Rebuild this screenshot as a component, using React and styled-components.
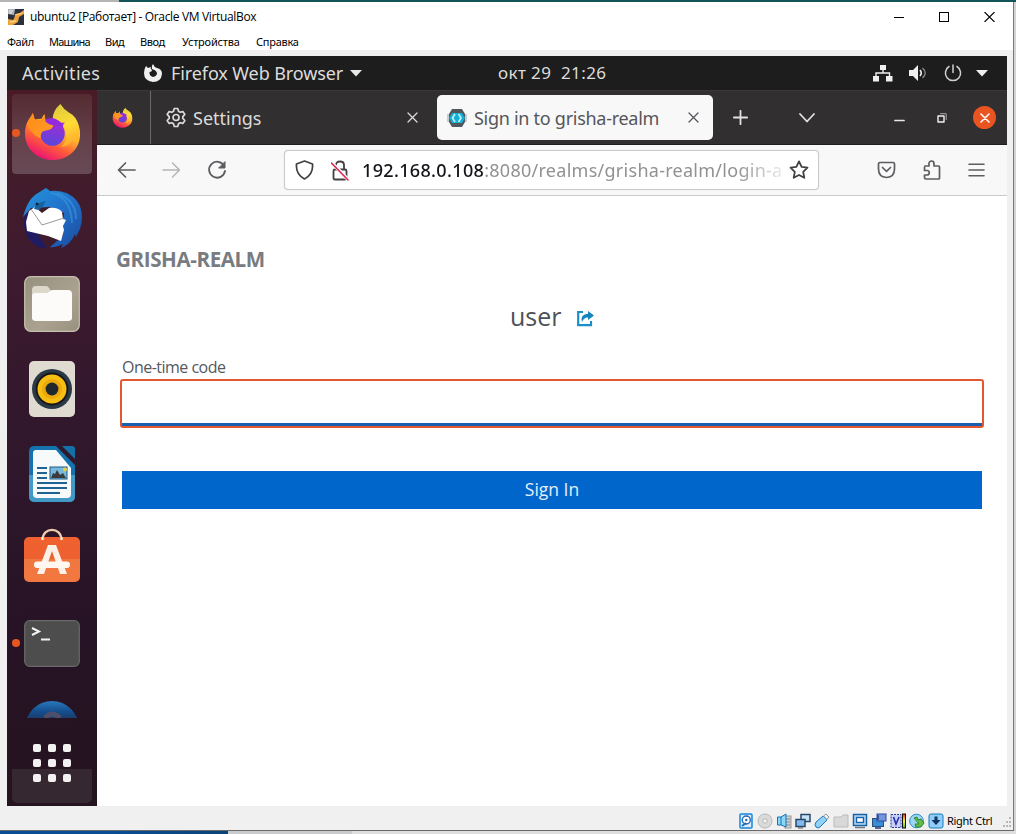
import React from 'react';
import styled, { createGlobalStyle } from 'styled-components';

const Global = createGlobalStyle`
  * { box-sizing: border-box; }
  html, body { margin: 0; padding: 0; overflow: hidden; }
  svg { display: block; flex: none; }
`;

const ui = '"Noto Sans", "Open Sans", sans-serif';

const Desktop = styled.div`
  width: 1016px; height: 834px; display: flex; flex-direction: column;
  background: #d3d3d3; overflow: hidden;
`;
const TopEdge = styled.div`
  height: 2px; flex: none;
  background: linear-gradient(90deg, #b4b4b4 119px, #12545a 119px);
`;
const BottomEdge = styled.div`
  height: 3px; flex: none;
  background: linear-gradient(90deg, #0a4d94 110px, #0a4378 228px, #c9cbcd 228px, #c9cbcd 352px, #dedede 352px);
`;
const HostWindow = styled.div`
  width: 1014px; height: 829px; display: flex; flex-direction: column;
  background: #f0f0f0; border-right: 1px solid #7a7a7a; border-bottom: 1px solid #6a6a6a;
`;
const TitleBar = styled.div`
  height: 30px; flex: none; background: #fff; display: flex; align-items: center; padding-left: 8px;
`;
const WindowTitle = styled.div`
  margin-left: 6px; width: 828px; white-space: nowrap; color: #000;
  font: 12px/16px "Open Sans", sans-serif; letter-spacing: -0.34px;
`;
const WindowControls = styled.div`
  display: flex; gap: 35px; margin-left: 36px;
`;
const MenuBar = styled.div`
  height: 18px; flex: none; background: #fff; display: flex; padding-left: 7px;
`;
const MenuItem = styled.div`
  width: ${p => p.$w}px; flex: none; font: 11px/19px "Noto Sans", sans-serif;
  letter-spacing: ${p => p.$ls || 0}px; color: #000; white-space: nowrap;
`;
const Guest = styled.div`
  width: 1000px; height: 750px; margin: 6px 0 0 7px; flex: none; display: flex; flex-direction: column;
  background: #fff; overflow: hidden; font-family: ${ui};
`;
const Panel = styled.div`
  height: 34px; flex: none; background: #1d1d1d; color: #dcdcdc; display: flex; align-items: center;
  padding-left: 15px; font-size: 18px; line-height: 34px; white-space: nowrap;
`;
const PanelText = styled.div`
  width: ${p => p.$w}px; flex: none; letter-spacing: ${p => p.$ls || 0}px; font-size: ${p => p.$size || 18}px;
  white-space: pre;
`;
const Spacer = styled.div`width: ${p => p.$w}px; flex: none;`;
const Work = styled.div`display: flex; height: 716px;`;
const Dock = styled.div`
  width: 90px; flex: none; display: flex; flex-direction: column; padding-top: 1px;
  background: linear-gradient(176deg, #4a1b26 0, #421c2b 90px, #3c1a2f 200px, #2f172c 370px, #261325 560px, #25131f 716px);
`;
const DockSlot = styled.div`
  height: 85px; flex: none; display: flex; align-items: center; padding-left: 5px; position: relative;
`;
const DockTile = styled.div`
  width: 80px; height: 80px; border-radius: 4px; display: flex; align-items: center; justify-content: center;
  padding-bottom: ${p => p.$lift || 0}px;
  background: ${p => p.$active ? 'linear-gradient(#542b31, #65414b 55%, #674a55)' : 'transparent'};
`;
const RunningDot = styled.div`
  position: absolute; left: 5px; top: 38px; width: 8px; height: 8px; border-radius: 50%; background: #e8571f;
`;
const PartialSlot = styled.div`
  height: 32px; flex: none; overflow: hidden; padding: 15px 0 0 19px;
`;
const AppsSlot = styled.div`
  flex: 1; padding: 0 5px 3px; display: flex; flex-direction: column; position: relative; justify-content: flex-end;
`;
const AppsTile = styled.div`height: 34px; border-radius: 0 0 5px 5px; background: #352831;`;
const AppsGrid = styled.div`
  position: absolute; left: 26px; top: 26px; display: grid; grid-template-columns: repeat(3, 8px);
  grid-auto-rows: 8px; gap: 7px;
`;
const AppsDot = styled.div`background: #f4f1f3; border-radius: 2px;`;
const Browser = styled.div`width: 910px; display: flex; flex-direction: column; background: #fff;`;
const TabStrip = styled.div`
  height: 55px; flex: none; background: #322f30; display: flex; align-items: center;
  border-bottom: 1px solid #1f1d1e; border-top: 1px solid #3b3839;
`;
const PinnedTab = styled.div`
  width: 54px; height: 53px; display: flex; align-items: center; padding-left: 15px; border-right: 1px solid #6b696a;
`;
const Tab = styled.div`
  width: ${p => p.$w}px; height: 45px; margin-left: ${p => p.$ml || 0}px; padding: 0 ${p => p.$pr}px 0 ${p => p.$pl}px;
  display: flex; align-items: center; border-radius: 5px; flex: none;
  background: ${p => p.$active ? '#f8f8f8' : 'transparent'}; color: ${p => p.$active ? '#55555a' : '#dcdada'};
`;
const TabTitle = styled.div`
  flex: 1; margin-left: ${p => p.$ml}px; font-size: 18px; line-height: 24px; white-space: nowrap;
  letter-spacing: ${p => p.$ls}px; padding-top: 1px;
`;
const CloseCircle = styled.div`
  width: 23px; height: 23px; border-radius: 50%; background: #e95420; display: flex; align-items: center; justify-content: center;
`;
const Toolbar = styled.div`
  height: 51px; flex: none; background: #f8f8f8; border-bottom: 1px solid #cacaca; display: flex; align-items: center;
  padding-left: 20px; color: #5d5d61;
`;
const AddressBar = styled.div`
  width: 535px; height: 40px; margin-left: 57px; border: 1px solid #cacacb; border-radius: 4px; background: #fff;
  display: flex; align-items: center; padding-left: 10px; color: #414145; box-shadow: 0 0 1px #ccc; flex: none;
`;
const Url = styled.div`
  width: 420px; margin: 0 7px 0 13px; font-size: 18px; line-height: 26px; white-space: nowrap;
  color: #919193; letter-spacing: ${p => p.$ls}px; flex: none;
  mask-image: linear-gradient(90deg, #000 375px, transparent 430px);
`;
const Host = styled.span`color: #15141a; letter-spacing: ${p => p.$ls}px; font-weight: 500;`;
const Page = styled.main`flex: 1; background: #fff; font-family: "Open Sans", sans-serif; padding: 46px 0 0 19px;`;
const Realm = styled.div`font-weight: 700; font-size: 20.6px; line-height: 34px; color: #787c81; letter-spacing: ${p => p.$ls}px;`;
const UserRow = styled.div`
  display: flex; align-items: center; height: 36px; margin: 22px 0 0 394px; color: #4d5258;
`;
const UserName = styled.div`width: 67px; font-size: 25px; line-height: 36px; padding-bottom: 1px;`;
const LogoutIcon = styled.svg`margin-top: 5px;`;
const Form = styled.form`width: 864px; margin-left: 4px; display: flex; flex-direction: column;`;
const FieldLabel = styled.label`
  margin: 23px 0 0 2px; height: 22px; font-size: 16px; line-height: 21px; color: #55585d; letter-spacing: ${p => p.$ls}px;
`;
const CodeField = styled.div`
  height: 49px; border: 2px solid #e2592f; border-radius: 3px; background: #fff; display: flex; align-items: flex-end;
`;
const FieldUnderline = styled.div`height: 3px; width: 100%; background: #185fae;`;
const SubmitButton = styled.button`
  width: 860px; height: 38px; margin: 43px 0 0 2px; padding: 0 0 2px; border: 0; background: #0066cc; color: #e4effa;
  font: 17.5px/36px "Open Sans", sans-serif; letter-spacing: ${p => p.$ls}px;
`;
const StatusBar = styled.div`
  flex: 1; display: flex; align-items: center; padding: 6px 0 0 738px; gap: 3px;
  font: 11px/16px "Noto Sans", sans-serif; color: #000;
`;
const HostKey = styled.div`width: 53px; white-space: nowrap; letter-spacing: ${p => p.$ls}px;`;

const Svg = ({ w, h = w, box, children, sw = 1.6 }) => (
  <svg width={w} height={h} viewBox={box || `0 0 ${w} ${h}`} fill="none" stroke="currentColor" strokeWidth={sw}
    strokeLinecap="round" strokeLinejoin="round">{children}</svg>
);

const FirefoxLogo = ({ size, id }) => (
  <svg width={size} height={size} viewBox="0 0 60 60">
    <defs>
      <linearGradient id={`${id}b`} x1=".85" y1=".1" x2=".3" y2="1">
        <stop offset="0" stopColor="#fff04a" /><stop offset=".35" stopColor="#ffb62a" />
        <stop offset=".65" stopColor="#ff5a3a" /><stop offset="1" stopColor="#e80e78" />
      </linearGradient>
      <linearGradient id={`${id}f`} x1="0" y1="0" x2="1" y2="1">
        <stop offset="0" stopColor="#ff8a14" /><stop offset="1" stopColor="#ff9d2c" />
      </linearGradient>
      <linearGradient id={`${id}y`} x1=".3" y1="0" x2=".5" y2="1">
        <stop offset="0" stopColor="#dccb3c" /><stop offset=".5" stopColor="#ffdb36" /><stop offset="1" stopColor="#ffa829" />
      </linearGradient>
      <linearGradient id={`${id}p`} x1=".6" y1="0" x2=".4" y2="1">
        <stop offset="0" stopColor="#a52bd6" /><stop offset="1" stopColor="#5648d8" />
      </linearGradient>
    </defs>
    <path d="M10 12 L12 18 Q15 17 19 17 L21 13 L23 19 Q30 16 41 18 L53 18 Q58 25 58 33 C58 48 46 59 30 59 C14 59 2 47 2 32 C2 24 5 18 9 14Z" fill={`url(#${id}b)`} />
    <path d="M38 2 Q30 9 30 18 Q41 20 44 30 Q46 40 38 46 Q50 45 52 34 Q55 36 54 42 Q59 34 57 25 Q54 14 47 11 Q41 7 38 2Z" fill={`url(#${id}y)`} />
    <circle cx="30" cy="32" r="12.5" fill={`url(#${id}p)`} />
    <path d="M20 20 Q29 12 39 21 L43 21 Q40 22 41 26 Q35 23 30 24Z" fill="#922be0" />
    <path d="M4 22 L10 11 L12 18 Q16 17 19 18 L22 12 L23 20 Q26 23 31 24 Q29 29 23 29 Q17 30 18 37 Q9 34 4 22Z" fill={`url(#${id}f)`} />
  </svg>
);

const Thunderbird = () => (
  <svg width="62" height="62" viewBox="0 0 62 62">
    <defs>
      <linearGradient id="tb" x1="0" y1="0" x2="1" y2="1"><stop stopColor="#2495dc" /><stop offset=".5" stopColor="#2171ca" /><stop offset="1" stopColor="#1a4a9d" /></linearGradient>
    </defs>
    <path d="M5 24 Q0 37 7 50 Q15 61 26 60 L18 48Z" fill="#201b62" />
    <path d="M2 29 Q7 10 17 5 L25 0 L29 3 Q46 1 56 13 Q64 24 59 41 L55 49 L54 46 Q50 56 40 60 L42 56 Q35 60 29 59 L42 48 L43 25 L28 19 L10 20Z" fill="url(#tb)" />
    <path d="M5 34 L8 23 L14 19 L21 25 L28 20 Q37 19 41 24 L42 31 L45 32 L42 38 L43 42 L40 53 L27 48 L6 43Z" fill="#fff" />
    <path d="M10 21 L21 37 L43 30" fill="none" stroke="#999b9e" strokeWidth="1" />
    <path d="M13 21 Q15 14 25 13 Q23 18 18 22Z" fill="#16629d" /><circle cx="16" cy="16" r="1.6" fill="#172845" />
    <path d="M30 5 Q50 9 51 35 M36 5 Q55 12 55 31" fill="none" stroke="#3e9ade" strokeWidth="2" opacity=".55" />
  </svg>
);

const Files = () => (
  <svg width="56" height="56" viewBox="0 0 56 56">
    <defs><linearGradient id="fi" x1="0" y1="0" x2="1" y2="1"><stop stopColor="#97907f" /><stop offset=".6" stopColor="#aaa28f" /><stop offset="1" stopColor="#99917f" /></linearGradient></defs>
    <rect x=".7" y=".7" width="54.6" height="54.6" rx="6" fill="url(#fi)" stroke="#c8c0ae" strokeWidth="1.2" />
    <path d="M8 14 Q8 10 12 10 H22 Q24 10 25 12 L28 16 V24 H8Z" fill="#ddd7ca" />
    <path d="M8 20 Q8 17 12 17 H23 L28 14 H44 Q48 14 48 18 V42 Q48 45 44 45 H12 Q8 45 8 42Z" fill="#fcfbfa" />
  </svg>
);

const Rhythmbox = () => (
  <svg width="48" height="58" viewBox="0 0 48 58">
    <rect x="1" y="1" width="46" height="56" rx="5" fill="#dfdbd0" />
    <circle cx="24" cy="29" r="20" fill="#2b3846" /><circle cx="24" cy="29" r="16.4" fill="#161616" />
    <circle cx="24" cy="29" r="14.5" fill="#f6bd13" /><circle cx="24" cy="29" r="10" fill="#eba90d" />
    <circle cx="24" cy="29" r="6.4" fill="#20272e" />
  </svg>
);

const Writer = () => (
  <svg width="48" height="58" viewBox="0 0 48 58">
    <path d="M6 1 H28 L47 20 V51 Q47 57 41 57 H7 Q1 57 1 51 V7 Q1 1 6 1Z" fill="#1473ad" />
    <path d="M1 30 H47 V51 Q47 57 41 57 H7 Q1 57 1 51Z" fill="#4399c5" />
    <path d="M34 1 H44 Q47 1 47 4 V14Z" fill="#1470a8" />
    <path d="M8 5 H28 L43 23 V49 Q43 53 39 53 H9 Q5 53 5 49 V8 Q5 5 8 5Z" fill="#f7fafb" />
    <path d="M9 23 H19 M9 28 H19 M9 33 H19 M9 38 H39 M9 43 H39 M9 48 H32" stroke="#206493" strokeWidth="2.2" />
    <rect x="22" y="22" width="17" height="12" fill="#78b8dd" stroke="#1d5a84" />
    <path d="M23 33 L25 28 L27 29 L29 25 L32 30 L35 28 L38 33Z" fill="#3c3c3c" /><circle cx="37" cy="24.5" r="2" fill="#e6cf45" />
  </svg>
);

const Software = () => (
  <svg width="58" height="56" viewBox="0 0 58 56">
    <defs><linearGradient id="sw" x1="0" y1="0" x2="0" y2="1"><stop stopColor="#ef6230" /><stop offset=".49" stopColor="#ee602f" /><stop offset=".5" stopColor="#f0773f" /><stop offset="1" stopColor="#f27840" /></linearGradient></defs>
    <path d="M19.5 12 C19.5 -1.5 38.5 -1.5 38.5 12" fill="none" stroke="#f1cdb0" strokeWidth="2.2" />
    <rect x="1" y="9" width="56" height="45" rx="5" fill="url(#sw)" />
    <path d="M19.5 9 V12 M38.5 9 V12" stroke="#fff0d9" strokeWidth="2.4" />
    <path d="M14 46 L25 17 H33 L44 46 H37 L29 23 L21 46Z" fill="#fdf1e7" />
    <rect x="11" y="33.5" width="36" height="6.5" rx="3.2" fill="#fff7f0" />
  </svg>
);

const Terminal = () => (
  <svg width="56" height="47" viewBox="0 0 56 47">
    <rect x=".7" y=".7" width="54.6" height="45.6" rx="5" fill="#4d4d4d" stroke="#6a6a6a" strokeWidth="1.2" />
    <path d="M8 8 L15 11.5 L8 15" fill="none" stroke="#f3f3f3" strokeWidth="2" /><path d="M17 19.5 H26" stroke="#f3f3f3" strokeWidth="2" />
  </svg>
);

const Disc = () => (
  <svg width="52" height="52" viewBox="0 0 52 52">
    <defs><linearGradient id="dc" x1="0" y1="0" x2="0" y2="1"><stop stopColor="#2978bc" /><stop offset=".2" stopColor="#144d8c" /><stop offset=".34" stopColor="#1d3965" /></linearGradient></defs>
    <circle cx="26" cy="27" r="27" fill="url(#dc)" />
    <path d="M19 17 Q26 9 34 17" fill="none" stroke="#4d4e69" strokeWidth="5" />
  </svg>
);

const VBoxIcon = () => (
  <svg width="16" height="16" viewBox="0 0 16 16">
    <rect width="16" height="16" fill="#2b303e" /><path d="M0 0 H7 L6 6 L0 5Z" fill="#aeb4bb" />
    <path d="M1 2 H5 M1 4 H4" stroke="#fff" strokeWidth=".8" />
    <path d="M0 16 V10 L5 11 Q7 9 7 5 L12 4 L16 1 V5 L11 8 L10 13 L5 16Z" fill="#efa33b" />
    <path d="M8 6 L14 4 M2 13 L8 12" stroke="#ffd184" strokeWidth="1.3" />
  </svg>
);

const X = ({ s = 11, sw = 1.3 }) => <Svg w={s} sw={sw}><path d={`M1 1 L${s - 1} ${s - 1} M${s - 1} 1 L1 ${s - 1}`} /></Svg>;

const StatusIcon = ({ kind }) => {
  const blue = '#2469b3';
  const art = {
    hdd: <><rect x="2" y="1" width="12" height="14" rx="1" fill="#d8edfc" stroke="#1784d8" strokeWidth="1.5" /><circle cx="8.3" cy="7" r="4" fill="#fff" stroke={blue} strokeWidth="1.4" /><circle cx="8.3" cy="7" r="1.2" fill={blue} /><path d="M4 13 L8 10" stroke={blue} strokeWidth="1.8" /></>,
    cd: <><circle cx="8" cy="8" r="7" fill="#dadada" stroke="#b8b8b8" /><circle cx="8" cy="8" r="2.2" fill="#f6f6f6" stroke="#b4b4b4" /></>,
    audio: <><rect x="9" y="3" width="6" height="12" fill="#d0d0d0" stroke="#999" /><path d="M10 6 H14 M10 9 H14 M10 12 H14" stroke="#777" strokeWidth=".8" /><path d="M1.5 4 H5 L10 1 V14 L5 12 H1.5Z" fill="#8bd7fa" stroke="#1472b7" /><path d="M5 4 V12" stroke="#1472b7" /></>,
    net: <><rect x="6" y="1.5" width="9" height="7" fill="#c5e2f7" stroke="#294867" strokeWidth="1.5" /><rect x="1" y="6.5" width="9" height="7" fill="#83baf0" stroke="#294867" strokeWidth="1.5" /><path d="M3 15 H8" stroke="#555" /></>,
    usb: <><path d="M9 3 L13 7 L6 14 Q4 16 2 14 Q0 12 2 9Z" fill="#90d2f5" stroke="#2176b8" /><path d="M9.5 3 L12 1 L15 4 L13 6.5Z" fill="#eee" stroke="#8d9aa3" /></>,
    folder: <path d="M1 4 H8 L10 2 H15 V14 H1Z" fill="#d8d8d8" stroke="#bbb" />,
    display: <><rect x="1.5" y="1.5" width="13" height="11" fill="#b8dbf8" stroke="#1862a6" strokeWidth="1.5" /><rect x="4.5" y="4.5" width="7" height="5" fill="#fff" stroke="#1862a6" strokeWidth="1.4" /><path d="M3 14.5 H13" stroke="#777" strokeWidth="1.5" /></>,
    record: <><rect x="1.5" y="5.5" width="11" height="8" fill="#378ed6" stroke="#294f7a" /><rect x="6" y="1" width="9" height="7" fill="#7396df" stroke="#2b4b9e" /><path d="M7 2 V7 M4 15 H10" stroke="#223b7a" strokeWidth="1.3" /></>,
    cpu: <><rect x="1" y="1.5" width="10" height="13" fill="#c8d0f9" stroke="#2f3a9f" strokeDasharray="2 1" /><path d="M3.5 4 L6 11 L9 4" fill="none" stroke="#2730a7" strokeWidth="1.6" /><rect x="12.5" y="1" width="3" height="14" fill="url(#load)" stroke="#111" /></>,
    mouse: <><circle cx="7.5" cy="8" r="6.8" fill="#9bd7f5" stroke="#2589cc" /><path d="M5 5 L8 4 L9 7 L12 6 L15 10 L12 14 L7 14 L6 11 L10 11Z" fill="#63bd4a" stroke="#338436" /></>,
    key: <><rect x="1" y="1" width="14" height="14" rx="2" fill="#8fcefa" stroke="#1878bb" /><path d="M6.5 3.5 H9.5 V7 H12.5 L8 12 L3.5 7 H6.5Z" fill="#10325c" /></>,
  }[kind];
  return <svg width="16" height="16" viewBox="0 0 16 16"><defs><linearGradient id="load" x1="0" y1="0" x2="0" y2="1"><stop stopColor="#e53420" /><stop offset=".5" stopColor="#fff230" /><stop offset="1" stopColor="#45b849" /></linearGradient></defs>{art}</svg>;
};

const gearPath = 'M8.3 1.5 H11.7 L12.5 4.3 L14.2 5.3 L17 4.6 L18.8 7.5 L16.8 9.6 V11.4 L18.8 13.5 L17 16.4 L14.2 15.7 L12.5 16.7 L11.7 19.5 H8.3 L7.5 16.7 L5.8 15.7 L3 16.4 L1.2 13.5 L3.2 11.4 V9.6 L1.2 7.5 L3 4.6 L5.8 5.3 L7.5 4.3Z';

export default function App() {
  return (
    <Desktop>
      <Global />
      <TopEdge />
      <HostWindow>
        <TitleBar>
          <VBoxIcon />
          <WindowTitle>ubuntu2 [Работает] - Oracle VM VirtualBox</WindowTitle>
          <WindowControls>
            <svg width="10" height="10"><path d="M0 5.5 H10" stroke="#000" /></svg>
            <svg width="10" height="10"><rect x=".5" y=".5" width="9" height="9" fill="none" stroke="#000" /></svg>
            <svg width="11" height="10"><path d="M.5 0 L10.5 10 M10.5 0 L.5 10" stroke="#000" strokeWidth="1.1" /></svg>
          </WindowControls>
        </TitleBar>
        <MenuBar>
          <MenuItem $w={42} $ls={-0.4}>Файл</MenuItem>
          <MenuItem $w={56} $ls={-0.8}>Машина</MenuItem>
          <MenuItem $w={35} $ls={-0.5}>Вид</MenuItem>
          <MenuItem $w={42} $ls={-0.4}>Ввод</MenuItem>
          <MenuItem $w={74} $ls={-0.2}>Устройства</MenuItem>
          <MenuItem $w={60} $ls={-0.25}>Справка</MenuItem>
        </MenuBar>
        <Guest>
          <Panel>
            <PanelText $w={121} $ls={0.33}>Activities</PanelText>
            <svg width="20" height="20" viewBox="0 0 20 20">
              <path d="M10 1 Q11 4 14 5 Q19 6 19 11 Q18 19 10 19 Q1 18 1 10 Q1 6 3 3 L5 5 L8 4 Q7 6 9 7 Q9 9 6.5 9 Q6 13 10 14 Q14 13 14 10 Q13 7 9 6 Q8 3 10 1Z" fill="#f0f0f0" />
            </svg>
            <Spacer $w={8} />
            <PanelText $w={179} $ls={-0.1}>Firefox Web Browser</PanelText>
            <svg width="12" height="7"><path d="M0 0 H12 L6 6.5Z" fill="#e8e8e8" /></svg>
            <Spacer $w={136} />
            <PanelText $w={375} $size={17} $ls={0.4}>окт 29  21:26</PanelText>
            <svg width="20" height="18" viewBox="0 0 20 18">
              <path d="M7 1 H13 V6 H7Z M0 12 H6 V17.5 H0Z M13 12 H19.5 V17.5 H13Z" fill="#f0f0f0" />
              <path d="M10 6 V9 M3 12 V9 H16.5 V12" fill="none" stroke="#f0f0f0" strokeWidth="1.4" />
            </svg>
            <Spacer $w={16} />
            <svg width="19" height="18" viewBox="0 0 19 18">
              <path d="M0 6 H4 L9 1 V17 L4 12 H0Z" fill="#f0f0f0" />
              <path d="M11 6 Q13.5 9 11 12" fill="none" stroke="#f0f0f0" strokeWidth="1.6" />
              <path d="M13.5 4 Q19 9 13.5 14" fill="none" stroke="#888" strokeWidth="1.4" />
            </svg>
            <Spacer $w={16} />
            <Svg w={18} sw={1.5}><path d="M5 2.5 A7.6 7.6 0 1 0 13 2.5 M9 1 V8.5" stroke="#cfcfcf" /></Svg>
            <Spacer $w={14} />
            <svg width="12" height="7"><path d="M0 0 H12 L6 6.5Z" fill="#f0f0f0" /></svg>
          </Panel>
          <Work>
            <Dock>
              <DockSlot><DockTile $active $lift={5}><FirefoxLogo size={59} id="d" /></DockTile><RunningDot /></DockSlot>
              <DockSlot><DockTile><Thunderbird /></DockTile></DockSlot>
              <DockSlot><DockTile><Files /></DockTile></DockSlot>
              <DockSlot><DockTile><Rhythmbox /></DockTile></DockSlot>
              <DockSlot><DockTile><Writer /></DockTile></DockSlot>
              <DockSlot><DockTile $lift={6}><Software /></DockTile></DockSlot>
              <DockSlot><DockTile><Terminal /></DockTile><RunningDot /></DockSlot>
              <PartialSlot><Disc /></PartialSlot>
              <AppsSlot>
                <AppsTile />
                <AppsGrid>{Array.from({ length: 9 }, (_, i) => <AppsDot key={i} />)}</AppsGrid>
              </AppsSlot>
            </Dock>
            <Browser>
              <TabStrip>
                <PinnedTab><FirefoxLogo size={21} id="p" /></PinnedTab>
                <Tab $w={286} $pl={15} $pr={19}>
                  <Svg w={20} h={21} sw={1.7}><path d={gearPath} /><circle cx="10" cy="10.5" r="3" /></Svg>
                  <TabTitle $ml={7} $ls={0}>Settings</TabTitle>
                  <X s={11} />
                </Tab>
                <Tab $w={276} $pl={10} $pr={14} $active>
                  <svg width="20" height="18" viewBox="0 0 20 18">
                    <path d="M0 5 H20 V13 H0Z" fill="#cacbcc" /><path d="M5 0 H15 L18 5 V13 L15 18 H5 L2 13 V5Z" fill="#51575d" />
                    <path d="M2 9 L5 4 H15 L18 9 L15 14 H5Z" fill="#15afd5" />
                    <path d="M8 5 L5.5 9 L8 13 M11.5 5 L14 9 L11.5 13" fill="none" stroke="#b9f3ff" strokeWidth="1.7" />
                  </svg>
                  <TabTitle $ml={7} $ls={-0.28}>Sign in to grisha-realm</TabTitle>
                  <X s={11} />
                </Tab>
                <Spacer $w={20} />
                <Svg w={15} sw={1.8}><path d="M7.5 .8 V14.2 M.8 7.5 H14.2" stroke="#e2e0e0" /></Svg>
                <Spacer $w={51} />
                <Svg w={16} h={10} sw={1.8}><path d="M1 1 L8 8.5 L15 1" stroke="#e2e0e0" /></Svg>
                <Spacer $w={79} />
                <Svg w={11} h={8} sw={1.7}><path d="M1 6.5 H10" stroke="#e8e8e8" /></Svg>
                <Spacer $w={32} />
                <Svg w={10} h={10} sw={1.4}><path d="M1 3 H7 V9 H1Z" stroke="#f1f1f1" /><path d="M3.5 .7 H9.2 V6.5" stroke="#aaa" strokeWidth="1" /></Svg>
                <Spacer $w={26} />
                <CloseCircle><Svg w={10} sw={1.6}><path d="M1 1 L9 9 M9 1 L1 9" stroke="#fff" /></Svg></CloseCircle>
              </TabStrip>
              <Toolbar>
                <Svg w={19} h={18} sw={1.7}><path d="M18 9 H2 M8.5 2 L1.5 9 L8.5 16" /></Svg>
                <Spacer $w={26} />
                <Svg w={19} h={18} sw={1.5}><path d="M1 9 H17 M10.5 2 L17.5 9 L10.5 16" stroke="#b5b5b8" /></Svg>
                <Spacer $w={26} />
                <Svg w={20} h={20} sw={1.8}><path d="M17.2 6 A8 8 0 1 0 18 11" /><path d="M18 2 V8 H12Z" fill="currentColor" strokeWidth="1" /></Svg>
                <AddressBar>
                  <Svg w={19} h={20} sw={1.7}><path d="M9.5 1 L17.5 4 Q18.5 14 9.5 19 Q.5 14 1.5 4Z" /></Svg>
                  <Spacer $w={17} />
                  <Svg w={18} h={21} sw={1.8}><path d="M5 9 V5 Q5 1.5 9 1.5 Q13 1.5 13 5 V9 M5 9.5 H14 Q15.5 9.5 15.5 11 V18 Q15.5 19.5 14 19.5 H4 Q2.5 19.5 2.5 18 V11 Q2.5 9.5 4 9.5" /><path d="M0 2 L17 19.5" stroke="#fff" strokeWidth="3.5" /><path d="M.5 3 L17 20" stroke="#e22850" strokeWidth="1.6" /></Svg>
                  <Url $ls={0.27}><Host $ls={0.35}>192.168.0.108</Host>:8080/realms/grisha-realm/login-a</Url>
                  <Svg w={20} h={20} sw={1.8}><path d="M10 1.4 L12.6 6.8 L18.5 7.6 L14.2 11.8 L15.3 17.8 L10 15 L4.7 17.8 L5.8 11.8 L1.5 7.6 L7.4 6.8Z" /></Svg>
                </AddressBar>
                <Spacer $w={58} />
                <Svg w={19} h={18} sw={1.7}><path d="M3 1.5 H16 Q17.5 1.5 17.5 3 V8 Q17.5 16 9.5 16.5 Q1.5 16 1.5 8 V3 Q1.5 1.5 3 1.5Z M5.5 6.5 L9.5 10.3 L13.5 6.5" /></Svg>
                <Spacer $w={27} />
                <Svg w={18} h={21} sw={1.7}><path d="M2 6 H6 V3.5 A2.4 2.4 0 0 1 11 3.5 V6 H15.5 Q16.5 6 16.5 7 V18 Q16.5 19 15.5 19 H3 Q1.5 19 1.5 17.5 V15 H4 A2.2 2.2 0 0 0 4 10.5 H1.5 V7" /></Svg>
                <Spacer $w={27} />
                <Svg w={17} h={14} sw={1.6}><path d="M1 1.2 H16 M1 7 H16 M1 12.8 H16" /></Svg>
              </Toolbar>
              <Page>
                <Realm $ls={-0.4}>GRISHA-REALM</Realm>
                <UserRow>
                  <UserName>user</UserName>
                  <LogoutIcon width="17" height="17" viewBox="0 0 17 17">
                    <path d="M6 2 H1.2 V15.2 H14 V11" fill="none" stroke="#1b8fc9" strokeWidth="2.2" />
                    <path d="M11 1 L17 5.5 L11 10 V7.5 Q7 7 5 12 Q3 4 11 3.7Z" fill="#1583bd" />
                  </LogoutIcon>
                </UserRow>
                <Form>
                  <FieldLabel $ls={-0.52}>One-time code</FieldLabel>
                  <CodeField><FieldUnderline /></CodeField>
                  <SubmitButton type="button" $ls={0}>Sign In</SubmitButton>
                </Form>
              </Page>
            </Browser>
          </Work>
        </Guest>
        <StatusBar>
          {['hdd', 'cd', 'audio', 'net', 'usb', 'folder', 'display', 'record', 'cpu', 'mouse', 'key'].map(k => <StatusIcon key={k} kind={k} />)}
          <HostKey $ls={-0.3}>Right Ctrl</HostKey>
          <svg width="9" height="14"><path d="M6 3h2v2H6z M3 7h2v2H3z M6 7h2v2H6z M0 11h2v2H0z M3 11h2v2H3z M6 11h2v2H6z" fill="#b8b8b8" /></svg>
        </StatusBar>
      </HostWindow>
      <BottomEdge />
    </Desktop>
  );
}
